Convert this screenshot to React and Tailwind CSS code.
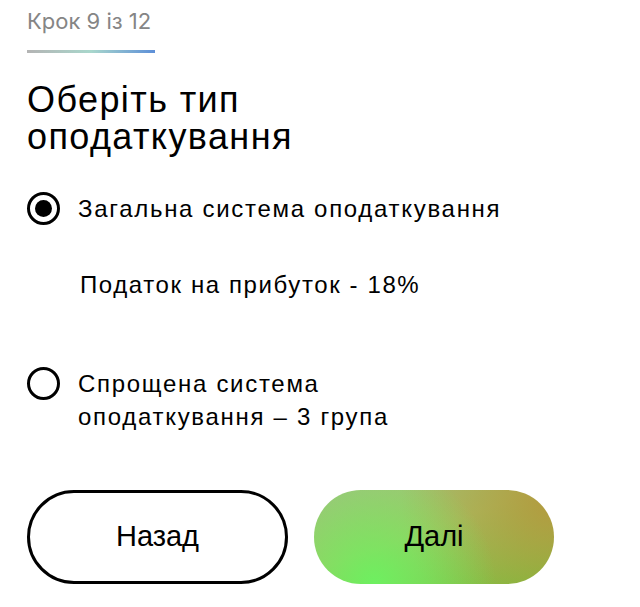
import React, { useState } from "react";

function Radio({ checked }) {
  return (
    <span className="flex h-[33px] w-[33px] shrink-0 items-center justify-center rounded-full border-[3px] border-black">
      {checked && <span className="h-[17px] w-[17px] rounded-full bg-black" />}
    </span>
  );
}

export default function App() {
  const [choice, setChoice] = useState("general");

  return (
    <div className="min-h-screen w-[640px] bg-white px-[27px] pt-[7px] font-['Liberation_Sans',Arial,sans-serif] text-black">
      <p className="font-['Inter',sans-serif] text-[22px] leading-[28px] text-[#858585]">Крок 9 із 12</p>
      <div className="mt-[15px] h-[3px] w-[128px] bg-[linear-gradient(90deg,#b4b4b4_0%,#a9d7cc_50%,#5d8fd8_100%)]" />

      <h1 className="mt-[28px] text-[36px] leading-[37px] tracking-[1.4px]">
        Оберіть тип
        <br />
        оподаткування
      </h1>

      {/* Option 1 */}
      <button
        onClick={() => setChoice("general")}
        className="mt-[37px] flex items-center gap-[18px] text-left"
      >
        <Radio checked={choice === "general"} />
        <span className="text-[24px] leading-[33px] tracking-[1.7px]">Загальна система оподаткування</span>
      </button>
      <p className="mt-[43px] pl-[53px] text-[24px] leading-[33px] tracking-[1.6px]">Податок на прибуток - 18%</p>

      {/* Option 2 */}
      <button
        onClick={() => setChoice("simple")}
        className="mt-[66px] flex items-start gap-[18px] text-left"
      >
        <Radio checked={choice === "simple"} />
        <span className="text-[24px] leading-[33px] tracking-[1.7px]">
          Спрощена система
          <br />
          оподаткування – 3 група
        </span>
      </button>

      {/* Buttons */}
      <div className="mt-[57px] flex gap-[26px]">
        <button className="flex h-[94px] w-[261px] items-center justify-center rounded-full border-[3px] border-black text-[29px]">
          Назад
        </button>
        <button className="flex h-[94px] w-[240px] items-center justify-center rounded-full bg-[radial-gradient(circle_at_25%_100%,#6ef060_0%,transparent_60%),radial-gradient(circle_at_100%_10%,#b39a3e_0%,transparent_60%),linear-gradient(160deg,#9fc27e_0%,#a6c267_45%,#6fc43a_100%)] text-[29px]">
          Далі
        </button>
      </div>
    </div>
  );
}
